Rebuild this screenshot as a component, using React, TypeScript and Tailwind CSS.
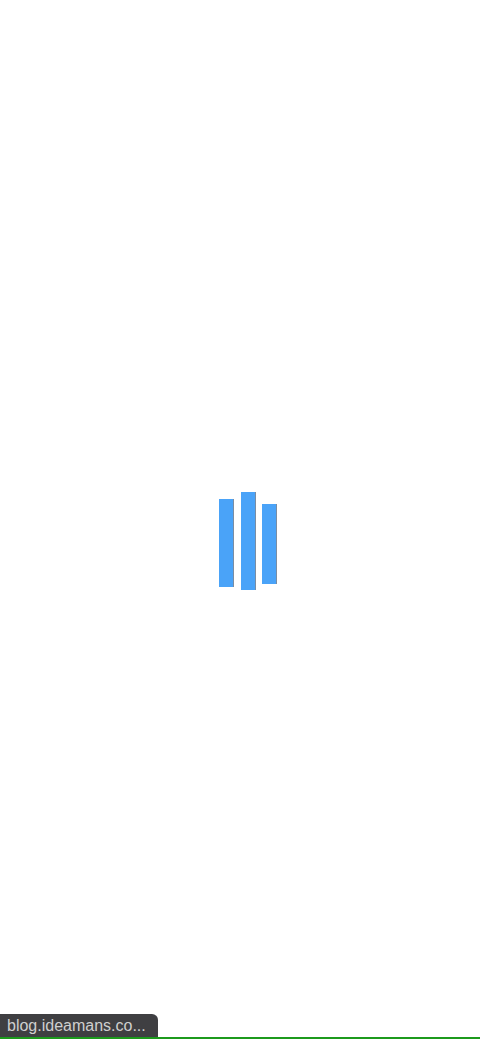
import React from "react";

export default function App() {
  return (
    <div className="relative w-[480px] h-[1039px] bg-white overflow-hidden" style={{ fontFamily: "'Liberation Sans', Arial, sans-serif" }}>
      <div className="flex items-start pt-[492px] pl-[219px] gap-[8px]">
        <div className="w-[14px] h-[88px] bg-[#4aa3f8] shadow-[1px_0_0_#7a8da3] mt-[7px]" />
        <div className="w-[14px] h-[98px] bg-[#4aa3f8] shadow-[1px_0_0_#7a8da3]" />
        <div className="w-[14px] h-[80px] bg-[#4aa3f8] shadow-[1px_0_0_#7a8da3] mt-[12px] ml-[-1px]" />
      </div>
      <div className="absolute left-0 bottom-[2px] h-[23px] w-[158px] bg-[#3f3f42] rounded-tr-[6px] flex items-center pl-[7px]">
        <span className="text-[16px] text-[#cfcfcf] leading-none">blog.ideamans.co...</span>
      </div>
      <div className="absolute left-0 bottom-0 w-full h-[2px] bg-[#1c9a1c]" />
    </div>
  );
}
